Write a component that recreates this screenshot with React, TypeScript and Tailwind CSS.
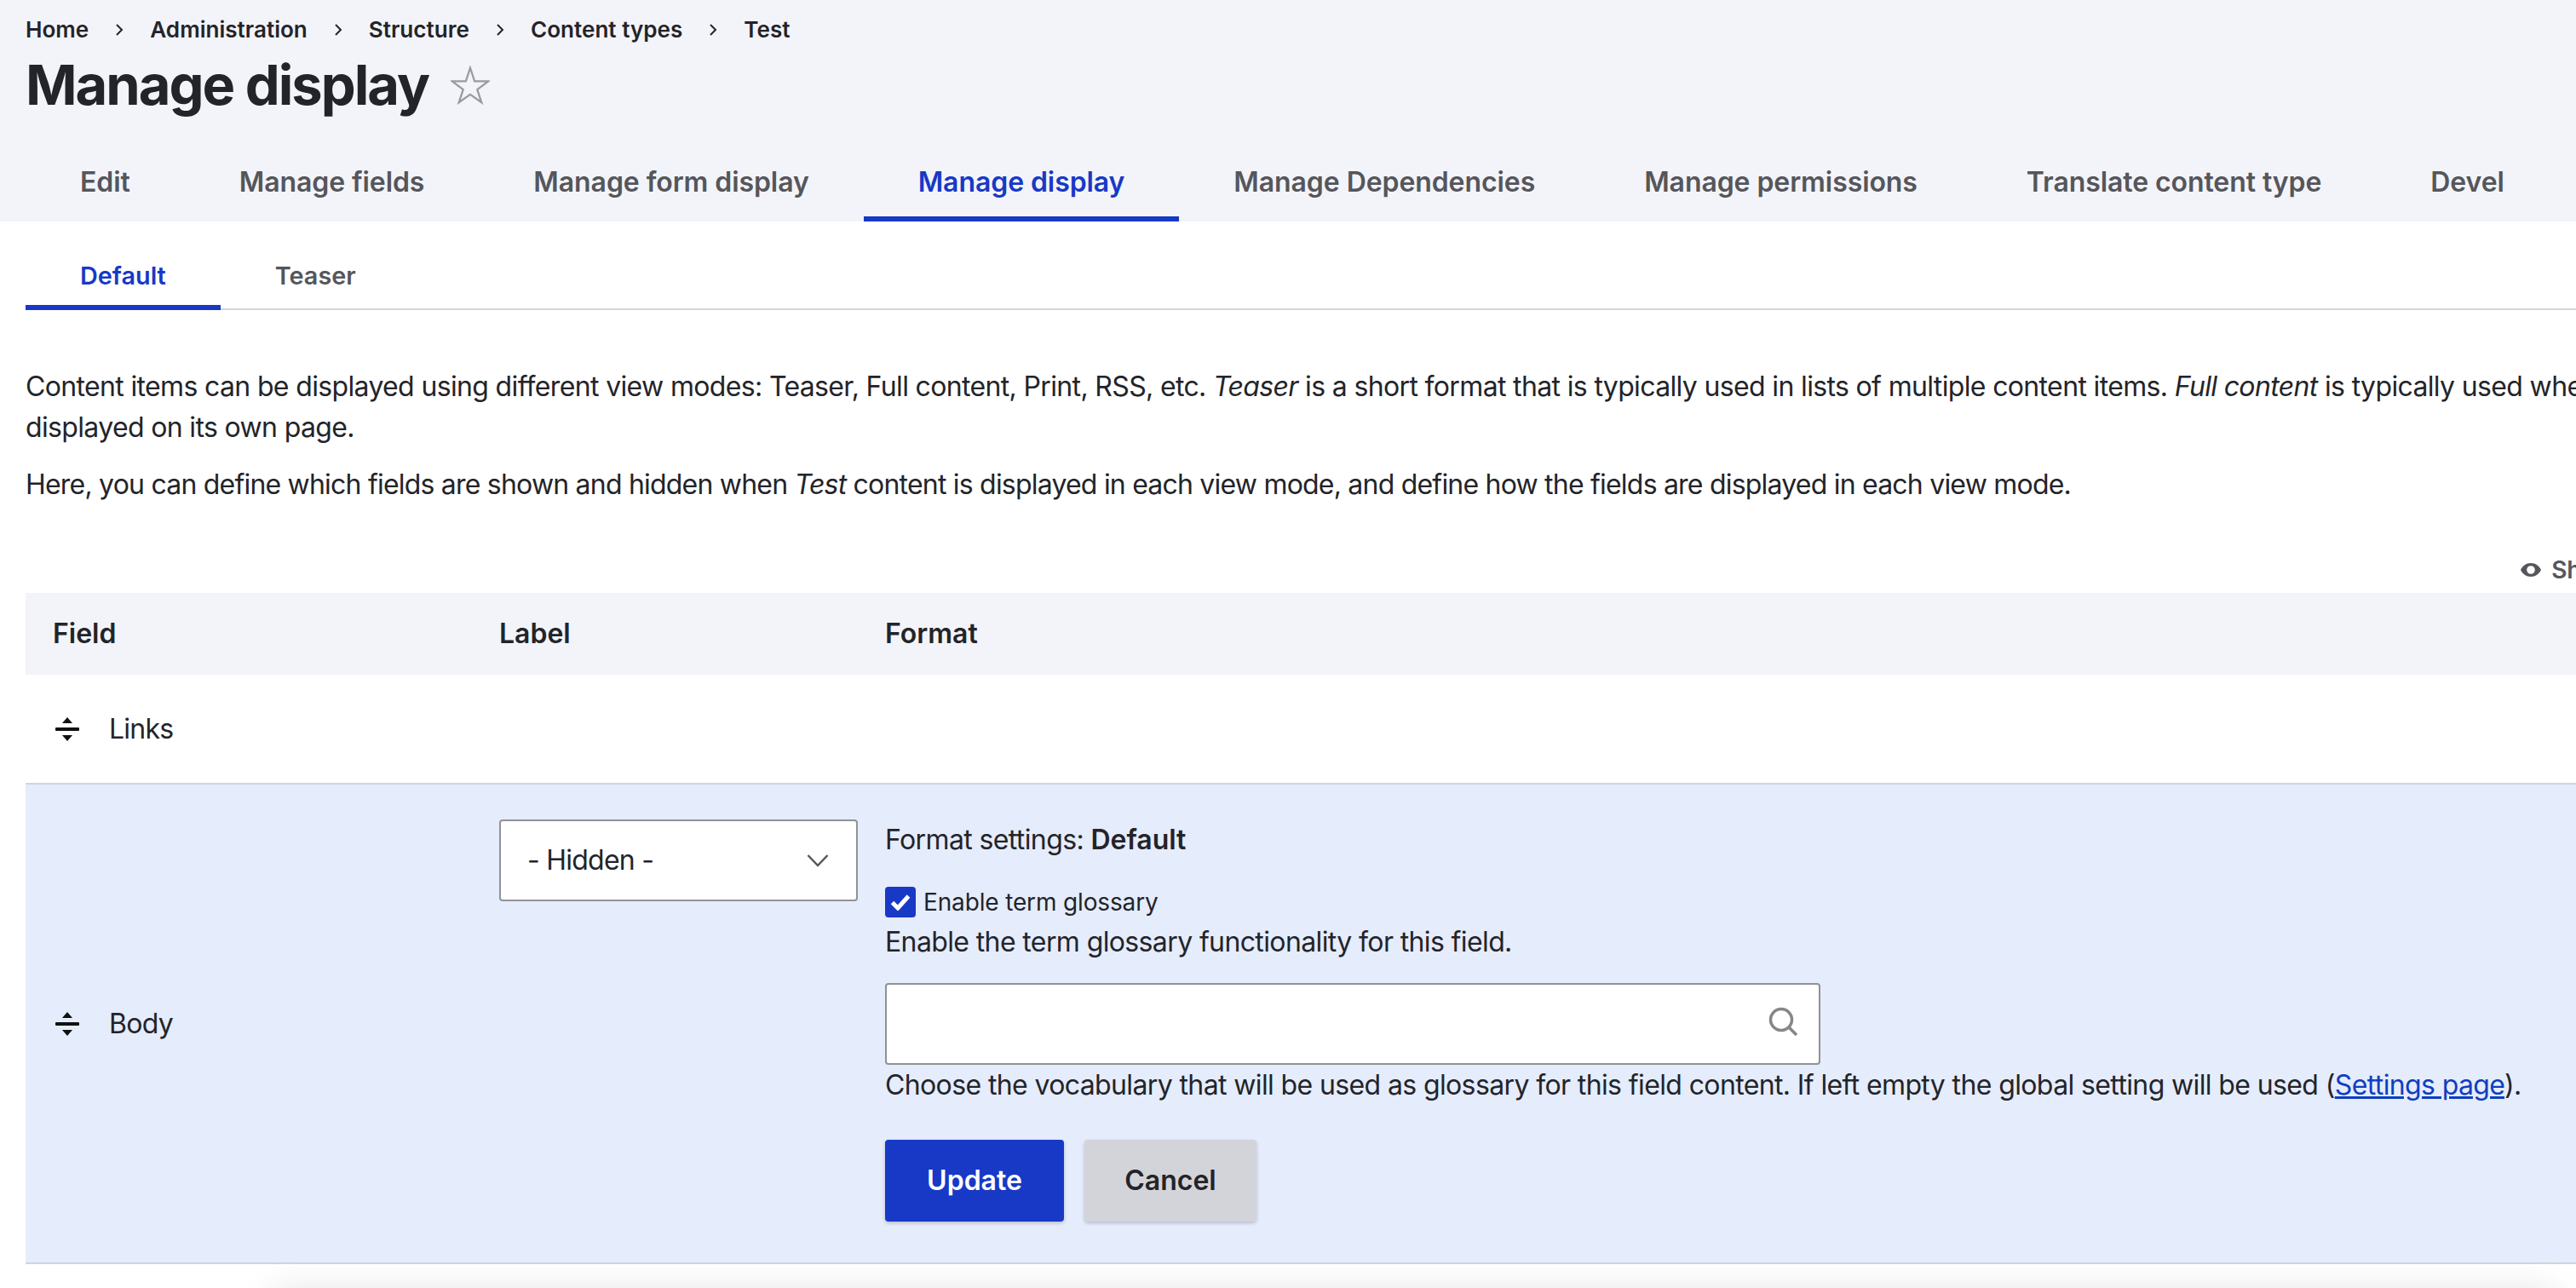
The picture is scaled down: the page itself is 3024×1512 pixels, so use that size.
import React from 'react';

const primaryTabs = [
  'Edit',
  'Manage fields',
  'Manage form display',
  'Manage display',
  'Manage Dependencies',
  'Manage permissions',
  'Translate content type',
  'Devel',
];

const crumbs = ['Home', 'Administration', 'Structure', 'Content types', 'Test'];

function DragHandle() {
  return (
    <svg width="30" height="30" viewBox="0 0 30 30" className="shrink-0" fill="#111">
      <path d="M15 1l6 7H9z" />
      <rect x="1" y="13" width="28" height="4" rx="1" />
      <path d="M15 29l6-7H9z" />
    </svg>
  );
}

export default function App() {
  return (
    <div className="w-[3024px] h-[1512px] overflow-hidden bg-white font-['Inter',sans-serif] text-[32px] leading-[48px] tracking-[-0.75px] text-[#232429]">
      <div className="w-[3400px]">
        {/* page header */}
        <div className="bg-[#f3f4f9] h-[260px] px-[30px] flex flex-col">
          <div className="flex items-center h-[24px] mt-[23px] text-[26.1px] tracking-normal font-semibold">
            {crumbs.map((c, i) => (
              <React.Fragment key={c}>
                {i > 0 && (
                  <svg width="10" height="16" viewBox="0 0 10 16" className="mx-[31px]" fill="none" stroke="#232429" strokeWidth="2">
                    <path d="M2 2l6 6-6 6" />
                  </svg>
                )}
                <span>{c}</span>
              </React.Fragment>
            ))}
          </div>
          <div className="flex items-center mt-[18px] h-[70px]">
            <h1 className="text-[65px] leading-[70px] tracking-[-2px] font-bold">Manage display</h1>
            <svg width="46" height="46" viewBox="0 0 50 50" className="ml-[26px]" fill="none" stroke="#9a9ba1" strokeWidth="2.5">
              <path d="M25 3l5.6 17H48L34 30.6 39.4 47 25 36.8 10.6 47 16 30.6 2 20h17.4z" />
            </svg>
          </div>
          <div className="flex mt-auto tracking-[-0.08px]">
            {primaryTabs.map((t) => (
              <div
                key={t}
                className={
                  t === 'Manage display'
                    ? 'h-[85px] px-[64px] pt-[15px] font-semibold text-[#1739c6] border-b-[6px] border-[#1739c6]'
                    : 'h-[85px] px-[64px] pt-[15px] font-semibold text-[#55565b]'
                }
              >
                {t}
              </div>
            ))}
          </div>
        </div>

        <div className="px-[30px]">
          {/* secondary tabs */}
          <div className="flex h-[104px] border-b-2 border-[#d3d4d9] text-[28.8px] tracking-normal font-semibold">
            <div className="h-[104px] px-[64px] pt-[40px] text-[#1739c6] border-b-[6px] border-[#1739c6]">Default</div>
            <div className="h-[104px] px-[64px] pt-[40px] text-[#55565b]">Teaser</div>
          </div>

          <p className="mt-[66px] tracking-[-0.65px]">
            Content items can be displayed using different view modes: Teaser, Full content, Print, RSS, etc. <em>Teaser</em> is a
            short format that is typically used in lists of multiple content items. <em>Full content</em> is typically used when the
            content item is displayed on its own page.
          </p>
          <p className="mt-[19px] tracking-[-0.79px]">
            Here, you can define which fields are shown and hidden when <em>Test</em> content is displayed in each view mode, and
            define how the fields are displayed in each view mode.
          </p>

          <div className="flex justify-end items-center h-[40px] mt-[56px] pr-[128px] text-[28px] tracking-normal font-semibold text-[#55565b]">
            <svg width="24" height="16" viewBox="0 0 24 16" className="mr-[12px]" fill="#55565b">
              <path fillRule="evenodd" d="M12 0C6.5 0 2.2 3.4 0 8c2.2 4.6 6.5 8 12 8s9.800-3.400 12-8c-2.200-4.600-6.500-8-12-8zm0 3.200a4.800 4.800 0 1 1 0 9.600 4.800 4.800 0 0 1 0-9.600z" />
            </svg>
            Show row weights
          </div>

          <table className="w-full mt-[7px] border-collapse table-fixed">
            <thead>
              <tr className="bg-[#f3f4f9] h-[96px] text-left tracking-normal">
                <th className="w-[524px] pl-[32px] font-semibold">Field</th>
                <th className="w-[453px] pl-[32px] font-semibold">Label</th>
                <th className="pl-[32px] font-semibold">Format</th>
              </tr>
            </thead>
            <tbody>
              <tr className="h-[128px] border-b-2 border-[#d3d4d9]">
                <td className="pl-[34px]">
                  <div className="flex items-center gap-[34px]">
                    <DragHandle />
                    Links
                  </div>
                </td>
                <td />
                <td />
              </tr>
              <tr className="bg-[#e5ecfc] border-b-2 border-[#d3d4d9]">
                <td className="pl-[34px] align-middle">
                  <div className="flex items-center gap-[34px]">
                    <DragHandle />
                    Body
                  </div>
                </td>
                <td className="pl-[32px] align-top pt-[41px]">
                  <div className="w-[421px] h-[96px] bg-white border-2 border-[#919297] rounded-[4px] flex items-center justify-between pl-[31px] pr-[32px]">
                    - Hidden -
                    <svg width="26" height="16" viewBox="0 0 26 16" fill="none" stroke="#55565b" strokeWidth="2.500">
                      <path d="M1.500 2L13 14 24.500 2" />
                    </svg>
                  </div>
                </td>
                <td className="pl-[32px] align-top pt-[41px] pb-[48px] tracking-[-0.62px]">
                  <div>
                    Format settings: <strong className="font-semibold tracking-normal">Default</strong>
                  </div>
                  <div className="flex items-center mt-[31px] text-[28px] leading-[36px] tracking-[-0.15px]">
                    <span className="w-[36px] h-[36px] rounded-[4px] bg-[#1739c6] flex items-center justify-center mr-[9px]">
                      <svg width="24" height="20" viewBox="0 0 24 20" fill="none" stroke="#fff" strokeWidth="5">
                        <path d="M2.500 10.500l6.500 6.500L21.500 3" />
                      </svg>
                    </span>
                    Enable term glossary
                  </div>
                  <div className="mt-[5px]">Enable the term glossary functionality for this field.</div>
                  <div className="relative w-[1098px] h-[96px] mt-[24px] bg-white border-2 border-[#919297] rounded-[4px]">
                    <svg width="36" height="36" viewBox="0 0 36 36" fill="none" stroke="#868686" strokeWidth="3.500" className="absolute right-[23px] top-[26px]">
                      <circle cx="15" cy="15" r="12.500" />
                      <path d="M24 24l9 9" />
                    </svg>
                  </div>
                  <div>
                    Choose the vocabulary that will be used as glossary for this field content. If left empty the global setting will be used (
                    <a className="text-[#0f3fc0] underline">Settings page</a>).
                  </div>
                  <div className="flex gap-[24px] mt-[40px] tracking-normal">
                    <button className="w-[210px] h-[96px] rounded-[4px] bg-[#1739c6] text-white font-semibold shadow-[0_2px_4px_rgba(0,0,0,0.2)]">Update</button>
                    <button className="w-[202px] h-[96px] rounded-[4px] bg-[#d3d4d9] text-[#232429] font-semibold shadow-[0_2px_4px_rgba(0,0,0,0.2)]">Cancel</button>
                  </div>
                </td>
              </tr>
            </tbody>
          </table>
        </div>

        {/* sticky action bar sits just below the fold, only its shadow shows */}
        <div className="h-[29px]" />
        <div className="ml-[320px] w-[2680px] h-[80px] bg-white shadow-[0_0_40px_rgba(0,0,0,0.1)]" />
      </div>
    </div>
  );
}
